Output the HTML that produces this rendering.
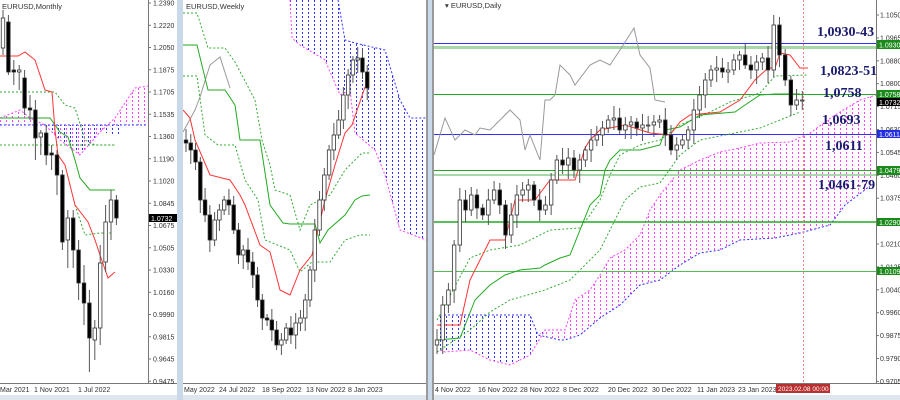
<!DOCTYPE html><html><head><meta charset="utf-8"><style>
body{margin:0;width:900px;height:400px;overflow:hidden;background:#dfe6ee;font-family:"Liberation Sans",sans-serif}
svg{position:absolute;left:0;top:0}
</style></head><body>
<svg id="s" width="900" height="400" xmlns="http://www.w3.org/2000/svg" font-family="Liberation Sans, sans-serif">
<defs id="defs">
<clipPath id="c1"><rect x="0" y="0" width="148" height="383"/></clipPath>
<clipPath id="c2"><rect x="183" y="0" width="243" height="383"/></clipPath>
<clipPath id="c3"><rect x="434" y="0" width="442" height="383"/></clipPath>
</defs>
<rect x="0" y="0" width="177" height="395" fill="#fff"/>
<rect x="177" y="0" width="6" height="400" fill="#c9d9ea"/>
<rect x="183" y="0" width="244" height="395" fill="#fff"/>
<rect x="427" y="0" width="7" height="400" fill="#c9d9ea"/>
<rect x="426" y="0" width="2" height="400" fill="#999"/>
<rect x="432" y="0" width="2" height="400" fill="#999"/>
<rect x="434" y="0" width="466" height="395" fill="#fff"/>
<line x1="0" y1="383.5" x2="177" y2="383.5" stroke="#777"/>
<line x1="183" y1="383.5" x2="426" y2="383.5" stroke="#777"/>
<line x1="434" y1="383.5" x2="900" y2="383.5" stroke="#777"/>
<line x1="148.5" y1="0" x2="148.5" y2="383" stroke="#777"/>
<line x1="876.5" y1="0" x2="876.5" y2="383" stroke="#777"/>
<g id="g1" clip-path="url(#c1)">
<g id="h1"></g>
<polyline points="0,118 20,110 30,118 45,125 60,140 80,155 100,132 115,118 135,88 148,86" fill="none" stroke="#ff40ff" stroke-dasharray="2,2"/>
<line x1="0" y1="125" x2="148" y2="125" stroke="#3030ff" stroke-dasharray="2,2"/>
<polyline points="0,92 55,92 65,105 75,108 85,140 95,145 115,145" fill="none" stroke="#3a3" stroke-dasharray="2,2"/>
<polyline points="0,145 115,145" fill="none" stroke="#3a3" stroke-dasharray="2,2"/>
<polyline points="75,205 85,235 100,233 112,233" fill="none" stroke="#3a3" stroke-dasharray="2,2"/>
<polyline points="0,118 50,118 60,132 68,137 75,160 80,178 90,190 115,190" fill="none" stroke="#2a2"/>
<polyline points="0,56 18,56 25,52 35,60 45,90 52,92 55,130 58,155 65,165 75,205 88,222 95,240 100,255 108,278 115,272" fill="none" stroke="#f33"/>
</g>
<g id="g2" clip-path="url(#c2)">
<g id="h2"></g>
<polyline points="338,0 345,40 355,43 385,50 400,100 410,118 426,118" fill="none" stroke="#3030ff" stroke-dasharray="2,2"/>
<polyline points="290,0 292,38 300,45 325,60 340,95 350,90 355,133 375,150 385,175 400,230 426,240" fill="none" stroke="#ff40ff" stroke-dasharray="2,2"/>
<polyline points="183,132 195,110 200,97 210,65 220,57 230,88" fill="none" stroke="#999"/>
<polyline points="183,13 197,13 208,48 225,48 235,62 255,100 262,140 270,165 275,190 290,195 300,230 310,205 330,195 345,170 362,153 370,153" fill="none" stroke="#3a3" stroke-dasharray="2,2"/>
<polyline points="183,76 197,76 205,135 218,145 235,145 245,180 258,200 265,240 290,250 300,272 312,262 330,262 345,240 360,235 370,235" fill="none" stroke="#3a3" stroke-dasharray="2,2"/>
<polyline points="183,45 197,45 208,90 225,90 235,105 240,140 260,140 270,205 283,223 290,224 315,224 320,243 328,230 345,215 355,200 362,196 370,195" fill="none" stroke="#2a2"/>
<polyline points="183,110 190,118 195,140 210,175 230,180 240,195 245,205 260,245 270,252 280,290 290,295 300,270 312,255 325,200 335,165 345,133 352,125 365,87" fill="none" stroke="#f33"/>
</g>
<g id="g3" clip-path="url(#c3)">
<g id="h3"></g>
<polyline points="440,315 530,315 538,335 560,340 565,340 580,335 600,318 620,305 640,285 660,280 680,265 700,253 720,250 740,240 775,238 800,233 830,225 845,205 870,186" fill="none" stroke="#3030ff" stroke-dasharray="2,2"/>
<polyline points="440,350 445,352 470,350 490,360 510,365 530,355 545,330 565,330 575,300 590,290 600,275 610,258 625,250 640,235 650,210 660,195 680,170 700,160 720,152 740,148 760,143 790,142 810,133 835,115 860,100 876,95" fill="none" stroke="#ff40ff" stroke-dasharray="2,2"/>
<line x1="434" y1="43.5" x2="876" y2="43.5" stroke="#3030ff"/>
<rect x="434" y="46" width="442" height="3" fill="#a8d8a8"/>
<line x1="434" y1="94.5" x2="876" y2="94.5" stroke="#2a2"/>
<line x1="434" y1="134.5" x2="876" y2="134.5" stroke="#3030ff"/>
<line x1="434" y1="170.5" x2="876" y2="170.5" stroke="#2a2"/>
<rect x="434" y="174" width="442" height="2" fill="#a8d8a8"/>
<line x1="434" y1="222" x2="876" y2="222" stroke="#2a2" stroke-width="1.5"/>
<line x1="434" y1="271.5" x2="876" y2="271.5" stroke="#5b5"/>
<polyline points="434,155 445,118 455,140 465,130 475,135 480,128 490,130 510,110 520,120 525,150 530,135 540,160 545,100 550,100 555,95 560,65 570,75 575,85 590,65 600,60 610,65 620,50 634,28 640,55 650,68 655,100 665,102" fill="none" stroke="#999"/>
<polyline points="437,352 470,330 490,312 510,300 545,290 570,280 600,250 610,230 625,200 640,187 660,183 680,155 700,140 760,128 800,112" fill="none" stroke="#3a3" stroke-dasharray="2,2"/>
<polyline points="437,320 470,258 490,250 520,245 550,230 580,228 590,215 600,200 610,175 620,155 640,145 660,140 680,125 710,112 730,102 760,93 775,76 808,75" fill="none" stroke="#3a3" stroke-dasharray="2,2"/>
<polyline points="437,340 460,338 475,300 490,285 505,275 520,270 540,268 545,265 560,258 570,255 590,205 600,195 605,170 610,160 620,150 640,150 660,145 665,130 680,127 700,115 735,112 745,105 760,95 775,94 800,94" fill="none" stroke="#2a2"/>
<polyline points="437,325 460,325 470,280 490,240 505,240 515,200 535,200 550,180 575,180 585,148 590,140 600,130 625,125 650,133 670,135 680,122 690,115 720,112 740,100 755,80 768,68 775,68 780,53 790,55 800,68 808,68" fill="none" stroke="#f33"/>
<line x1="803.5" y1="0" x2="803.5" y2="383" stroke="#e88" stroke-dasharray="2,2"/>
</g>
<g font-size="7.5" fill="#333">
<text x="2" y="9">EURUSD,Monthly</text>
<text x="186" y="9">EURUSD,Weekly</text>
<text x="445" y="8">▾ EURUSD,Daily</text>
</g>
<g id="ax" font-size="7" fill="#333"></g>
<g id="lbl" font-family="Liberation Serif, serif" font-weight="bold" font-size="14" fill="#1a1a6e">
<text x="817" y="36">1,0930-43</text>
<text x="820" y="75">1,0823-51</text>
<text x="823" y="97">1,0758</text>
<text x="822" y="124">1,0693</text>
<text x="825" y="150">1,0611</text>
<text x="818" y="189">1,0461-79</text>
</g>
<g id="tags" font-size="7" fill="#fff">
<rect x="877" y="40" width="23" height="9" fill="#1a8a1a"/><text x="879" y="47.5">1.0930</text>
<rect x="877" y="90" width="23" height="8" fill="#1a8a1a"/><text x="879" y="97">1.0758</text>
<rect x="877" y="98" width="23" height="8" fill="#000"/><text x="879" y="105">1.0732</text>
<rect x="877" y="130" width="23" height="8" fill="#2030e0"/><text x="879" y="137">1.0611</text>
<rect x="877" y="166" width="23" height="9" fill="#1a8a1a"/><text x="879" y="173">1.0479</text>
<rect x="877" y="218" width="23" height="8" fill="#1a8a1a"/><text x="879" y="225">1.0290</text>
<rect x="877" y="267" width="23" height="8" fill="#1a8a1a"/><text x="879" y="274">1.0109</text>
<rect x="149" y="214" width="28" height="8" fill="#000"/><text x="151" y="221">1.0732</text>
<rect x="776" y="384" width="54" height="9" fill="#b83030"/><text x="778" y="391" font-size="6.5">2023.02.08 00:00</text>
</g>
<g font-size="7" fill="#333">
<text x="0" y="392">Mar 2021</text><text x="34" y="392">1 Nov 2021</text><text x="78" y="392">1 Jul 2022</text>
<text x="184" y="392">May 2022</text><text x="219" y="392">24 Jul 2022</text><text x="262" y="392">18 Sep 2022</text><text x="306" y="392">13 Nov 2022</text><text x="348" y="392">8 Jan 2023</text>
<text x="435" y="392">4 Nov 2022</text><text x="478" y="392">16 Nov 2022</text><text x="520" y="392">28 Nov 2022</text><text x="563" y="392">8 Dec 2022</text><text x="608" y="392">20 Dec 2022</text><text x="652" y="392">30 Dec 2022</text><text x="697" y="392">11 Jan 2023</text><text x="738" y="392">23 Jan 2023</text>
</g>
</svg>
<script>
var NS="http://www.w3.org/2000/svg",s=document.getElementById('s'),defs=document.getElementById('defs');
function el(t,a,p){var e=document.createElementNS(NS,t);for(var k in a)e.setAttribute(k,a[k]);(p||s).appendChild(e);return e;}
var hc=0;
function hatch(gid,pts,color,x0,x1){hc++;var cp=el('clipPath',{id:'hc'+hc},defs);el('polygon',{points:pts},cp);
var g=el('g',{'clip-path':'url(#hc'+hc+')'},document.getElementById(gid));
for(var x=x0;x<=x1;x+=6){el('line',{x1:x+0.5,y1:0,x2:x+0.5,y2:383,stroke:color,'stroke-width':1,'stroke-dasharray':'2,2'},g);}}
hatch('h1',"0,118 20,110 30,118 45,125 60,140 80,155 100,132 115,118 135,88 148,86 148,125 0,125",'#ff40ff',0,148);
hatch('h1',"0,125 148,125 148,140 100,132 80,155 60,140 45,125",'#3030ff',40,120);
hatch('h2',"290,0 338,0 345,40 355,43 385,50 400,100 410,118 426,118 426,240 400,230 385,175 375,150 355,133 350,90 340,95 325,60 300,45 292,38",'#3030ff',290,426);
hatch('h3',"440,315 530,315 538,335 545,330 530,355 510,365 490,360 470,350 445,352 440,350",'#3030ff',440,545);
hatch('h3',"545,330 565,330 575,300 590,290 600,275 610,258 625,250 640,235 650,210 660,195 680,170 700,160 720,152 740,148 760,143 790,142 810,133 835,115 860,100 876,95 876,186 870,186 845,205 830,225 800,233 775,238 740,240 720,250 700,253 680,265 660,280 640,285 620,305 600,318 580,335 565,340 560,340 538,335",'#ff40ff',540,876);
function cand(g,x,o,c,h,l,w){el('line',{x1:x,y1:h,x2:x,y2:l,stroke:'#555'},g);var t=Math.min(o,c),b=Math.max(o,c);if(b-t<1)b=t+1;el('rect',{x:x-w/2,y:t,width:w,height:b-t,fill:c>o?'#000':'#fff',stroke:'#333','stroke-width':0.8},g);}
var M=[[48,18,10,55],[22,72,15,75],[70,72,60,85],[72,70,65,90],[78,108,70,115],[108,110,95,120],[110,138,100,160],[137,133,130,155],[133,155,125,165],[153,155,145,170],[155,175,150,195],[175,242,170,250],[240,218,210,268],[218,250,210,268],[250,283,240,300],[283,303,265,325],[303,338,290,372],[340,328,320,360],[328,263,245,345],[262,222,205,272],[222,200,190,240],[200,218,195,225]];
var g1=document.getElementById('g1');M.forEach(function(d,i){cand(g1,3+i*5.4,d[0],d[1],d[2],d[3],3.5);});
function series(g,arr,x0,x1,w){var sp=(x1-x0)/(arr.length-1);for(var i=1;i<arr.length;i++){var o=arr[i-1],c=arr[i];var h=Math.min(o,c)-4-(i*7%9),l=Math.max(o,c)+4+(i*5%11);cand(g,x0+(i-1)*sp,o,c,h,l,w);}}
var W=[140,143,150,162,200,215,240,220,210,200,205,230,255,250,262,275,300,318,320,330,345,340,328,335,323,318,300,270,230,200,175,150,135,120,95,75,60,58,72,88];
series(document.getElementById('g2'),W,186,372,3.5);
var D=[345,340,305,290,245,200,210,195,208,215,200,190,205,235,215,195,190,185,200,210,205,180,160,165,158,170,160,150,140,135,128,120,118,130,125,122,128,125,125,122,120,135,150,145,140,130,110,95,80,70,68,72,70,60,55,65,70,62,58,70,25,55,80,105,100,100];
series(document.getElementById('g3'),D,437,808,3.5);
var ax=document.getElementById('ax');
var ml=['1.2390','1.2220','1.2050','1.1875','1.1705','1.1535','1.1360','1.1190','1.1020','1.0845','1.0675','1.0505','1.0330','1.0160','0.9990','0.9815','0.9645','0.9475'];
ml.forEach(function(t,i){var y=3+i*22.25;el('line',{x1:148,y1:y,x2:151,y2:y,stroke:'#777'},ax);var e=el('text',{x:153,y:y+2.5},ax);e.textContent=t;});
var dl=['1.1050','1.0965','1.0880','1.0800','1.0715','1.0630','1.0545','1.0460','1.0375','1.0290','1.0210','1.0125','1.0040','0.9960','0.9875','0.9790','0.9705'];
dl.forEach(function(t,i){var y=15+i*22.9;el('line',{x1:876,y1:y,x2:879,y2:y,stroke:'#777'},ax);var e=el('text',{x:880,y:y+2.5},ax);e.textContent=t;});
s.appendChild(document.getElementById('lbl'));
s.appendChild(document.getElementById('tags'));
</script>
</body></html>
